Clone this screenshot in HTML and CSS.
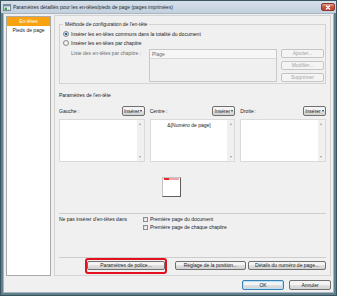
FILE: index.html
```html
<!DOCTYPE html>
<html lang="fr">
<head>
  <meta charset="UTF-8">
  <title>Paramètres détaillés pour les en-têtes/pieds de page</title>
  <link rel="stylesheet" href="styles.css">
</head>
<body>
  <div class="window">
    <div class="titlebar">
      <svg class="app-icon" width="8" height="7" viewBox="0 0 8 7">
        <rect x="0.5" y="0.5" width="7" height="6" fill="#fff" stroke="#7d8a96"/>
        <rect x="1" y="1" width="6" height="1.5" fill="#6d8fb3"/>
        <rect x="1.5" y="3.5" width="2.5" height="2.5" fill="#3fa24a"/>
        <rect x="4.5" y="3.5" width="2" height="1" fill="#b9c4cf"/>
        <rect x="4.5" y="5" width="2" height="1" fill="#b9c4cf"/>
      </svg>
      <span class="title">Paramètres détaillés pour les en-têtes/pieds de page (pages imprimées)</span>
      <div class="close">
        <svg width="6" height="5" viewBox="0 0 6 5">
          <path d="M1 0.5 L5 4.5 M5 0.5 L1 4.5" stroke="#fff" stroke-width="1.2"/>
        </svg>
      </div>
    </div>

    <div class="client">
      <div class="top">
        <ul class="nav">
          <li class="active">En-têtes</li>
          <li>Pieds de page</li>
        </ul>

        <div class="panel">
          <fieldset class="method">
            <legend>Méthode de configuration de l'en-tête</legend>
            <div class="radio-row"><span class="radio checked"></span>Insérer les en-têtes communs dans la totalité du document</div>
            <div class="radio-row"><span class="radio"></span>Insérer les en-têtes par chapitre</div>
            <div class="chapter-row">
              <span class="chapter-label">Liste des en-têtes par chapitre :</span>
              <div class="listbox">
                <div class="list-head">Plage</div>
              </div>
              <div class="side-buttons">
                <button class="btn disabled">Ajouter...</button>
                <button class="btn disabled">Modifier...</button>
                <button class="btn disabled">Supprimer</button>
              </div>
            </div>
          </fieldset>

          <div class="section-title">Paramètres de l'en-tête</div>

          <div class="columns">
            <div class="col">
              <div class="col-head"><span>Gauche :</span><button class="btn insert">Insérer<span class="caret"></span></button></div>
              <div class="textbox"><div class="text"></div><div class="scroll"><span class="up"></span><span class="down"></span></div></div>
            </div>
            <div class="col">
              <div class="col-head"><span>Centre :</span><button class="btn insert">Insérer<span class="caret"></span></button></div>
              <div class="textbox"><div class="text">&amp;[Numéro de page]</div><div class="scroll"><span class="up"></span><span class="down"></span></div></div>
            </div>
            <div class="col">
              <div class="col-head"><span>Droite :</span><button class="btn insert">Insérer<span class="caret"></span></button></div>
              <div class="textbox"><div class="text"></div><div class="scroll"><span class="up"></span><span class="down"></span></div></div>
            </div>
          </div>

          <div class="preview"><div class="preview-bar"></div></div>

          <div class="separator"></div>

          <div class="exclude">
            <span class="exclude-label">Ne pas insérer d'en-têtes dans</span>
            <div class="checks">
              <div class="check-row"><span class="check"></span>Première page du document</div>
              <div class="check-row"><span class="check"></span>Première page de chaque chapitre</div>
            </div>
          </div>

          <div class="separator sep2"></div>

          <div class="bottom-buttons">
            <span class="highlight"><button class="btn police">Paramètres de police...</button></span>
            <button class="btn position">Réglage de la position...</button>
            <button class="btn details">Détails du numéro de page...</button>
          </div>
        </div>
      </div>

      <div class="dialog-buttons">
        <button class="btn default">OK</button>
        <button class="btn">Annuler</button>
      </div>
    </div>
  </div>
</body>
</html>
```

FILE: styles.css
```css
* {
  box-sizing: border-box;
}
body {
  margin: 0;
  font-family: "Liberation Sans", Arial, sans-serif;
  font-size: 5px;
  color: #222;
}
.window {
  width: 337px;
  height: 296px;
  border: 1px solid #3b5560;
  background: #5f818c;
  padding: 0 2px 2px;
  display: flex;
  flex-direction: column;
}
.titlebar {
  height: 12px;
  margin: 0 -2px;
  padding: 0 1px 0 2px;
  background: linear-gradient(#d6e0ea, #c2d0dd);
  display: flex;
  align-items: center;
}
.app-icon {
  flex: none;
}
.title {
  margin-left: 2px;
  font-size: 5px;
  white-space: nowrap;
  color: #1e2a36;
}
.close {
  margin-left: auto;
  width: 14px;
  height: 8px;
  border: 1px solid #8a3b30;
  border-radius: 2px;
  background: linear-gradient(#e39a8b, #c74f3c 55%, #b8432f);
  display: flex;
  align-items: center;
  justify-content: center;
}
.client {
  flex: 1;
  background: #f0f0f0;
  border: 1px solid #a9b6c2;
  padding: 1px 2px 0;
  display: flex;
  flex-direction: column;
}
.top {
  display: flex;
  gap: 3px;
  height: 261px;
}
.nav {
  list-style: none;
  margin: 1px 0 0;
  padding: 0;
  width: 45px;
  background: #fff;
  border: 1px solid #a9a9a9;
}
.nav li {
  height: 9px;
  line-height: 9px;
  text-align: center;
}
.nav li.active {
  background: #f7a20e;
  color: #fff;
}
.panel {
  flex: 1;
  border: 1px solid #d3d3d3;
  padding: 0 4px;
  display: flex;
  flex-direction: column;
}
.method {
  margin: 4px 0 0;
  padding: 2px 1px 1px 3px;
  border: 1px solid #d3d3d3;
  min-width: 0;
}
.method legend {
  padding: 0 2px;
  line-height: 8px;
}
.radio-row {
  display: flex;
  align-items: center;
  height: 8px;
}
.radio-row + .radio-row {
  margin-top: 1px;
}
.radio {
  width: 6px;
  height: 6px;
  margin-right: 2px;
  border: 1px solid #8a8a8a;
  border-radius: 50%;
  background: radial-gradient(circle, #fff, #dedede);
}
.radio.checked {
  background: radial-gradient(circle, #2a64a8 0 1.2px, #d6e3f1 1.6px);
}
.chapter-row {
  display: flex;
  margin-top: 2px;
  height: 33px;
}
.chapter-label {
  width: 78px;
  margin-left: 8px;
  line-height: 8px;
  color: #6d6d6d;
}
.listbox {
  width: 128px;
  border: 1px solid #c8c8c8;
  background: #f0f0f0;
}
.list-head {
  height: 9px;
  line-height: 8px;
  padding-left: 2px;
  border-bottom: 1px solid #d8d8d8;
  background: #f6f6f6;
  color: #6d6d6d;
}
.side-buttons {
  width: 43px;
  margin-left: 4px;
  display: flex;
  flex-direction: column;
  gap: 3px;
}
.btn {
  font: inherit;
  color: #222;
  height: 9px;
  padding: 0;
  border: 1px solid #707070;
  border-radius: 2px;
  background: linear-gradient(#f4f4f4 0 45%, #e0e0e0 50%, #d2d2d2);
  line-height: 7px;
  white-space: nowrap;
}
.btn.disabled {
  border-color: #c5c5c5;
  background: #f4f4f4;
  color: #a6a6a6;
}
.section-title {
  margin-top: 7px;
  line-height: 8px;
}
.columns {
  display: grid;
  grid-template-columns: repeat(3, 1fr);
  column-gap: 5px;
  margin-top: 7px;
}
.col-head {
  display: flex;
  align-items: center;
  justify-content: space-between;
  height: 10px;
}
.btn.insert {
  width: 23px;
  height: 10px;
  display: flex;
  align-items: center;
  justify-content: center;
  gap: 1px;
}
.caret {
  border-left: 1.5px solid transparent;
  border-right: 1.5px solid transparent;
  border-top: 2px solid #333;
}
.textbox {
  margin-top: 3px;
  height: 43px;
  display: flex;
  background: #fff;
  border: 1px solid #dadada;
}
.textbox .text {
  flex: 1;
  padding-top: 2px;
  text-align: center;
  line-height: 7px;
}
.scroll {
  width: 7px;
  padding: 3px 0;
  display: flex;
  flex-direction: column;
  justify-content: space-between;
  align-items: center;
  background: #f0f0f0;
}
.scroll .up {
  border-left: 1.5px solid transparent;
  border-right: 1.5px solid transparent;
  border-bottom: 2px solid #9a9a9a;
}
.scroll .down {
  border-left: 1.5px solid transparent;
  border-right: 1.5px solid transparent;
  border-top: 2px solid #9a9a9a;
}
.preview {
  width: 19px;
  height: 20px;
  margin: 15px 0 0 103px;
  background: #fff;
  border: 1px solid #c4c4c4;
  border-right-color: #5d5d5d;
  border-bottom-color: #5d5d5d;
}
.preview-bar {
  height: 2px;
  margin: 0 1px;
  background: linear-gradient(90deg, #e8262a 0 35%, #f3a6a8 35%);
}
.separator {
  margin-top: 16px;
  border-top: 1px solid #cdcdcd;
}
.exclude {
  display: flex;
  margin-top: 1px;
}
.exclude-label {
  width: 84px;
  line-height: 8px;
}
.check-row {
  display: flex;
  align-items: center;
  height: 8px;
}
.check {
  width: 5px;
  height: 5px;
  margin-right: 2px;
  border: 1px solid #8e8f8f;
  background: linear-gradient(135deg, #d8d8d8, #fbfbfb);
}
.separator.sep2 {
  margin-top: 26px;
}
.bottom-buttons {
  display: flex;
  margin-top: 3px;
}
.highlight {
  position: relative;
  display: flex;
  margin-left: 28px;
}
.highlight::after {
  content: "";
  position: absolute;
  left: -2px;
  right: -2px;
  top: -3px;
  bottom: -4px;
  border: 2px solid #e5101f;
  border-radius: 3px;
}
.btn.police {
  width: 78px;
}
.btn.position {
  width: 71px;
  margin-left: 10px;
}
.btn.details {
  width: 78px;
  margin-left: 2px;
}
.dialog-buttons {
  display: flex;
  justify-content: flex-end;
  gap: 5px;
  margin-top: 4px;
}
.dialog-buttons .btn {
  width: 42px;
  height: 10px;
  line-height: 8px;
}
.btn.default {
  border-color: #3c7fb1;
  box-shadow: inset 0 0 0 1px #b8e1f7;
}
```
